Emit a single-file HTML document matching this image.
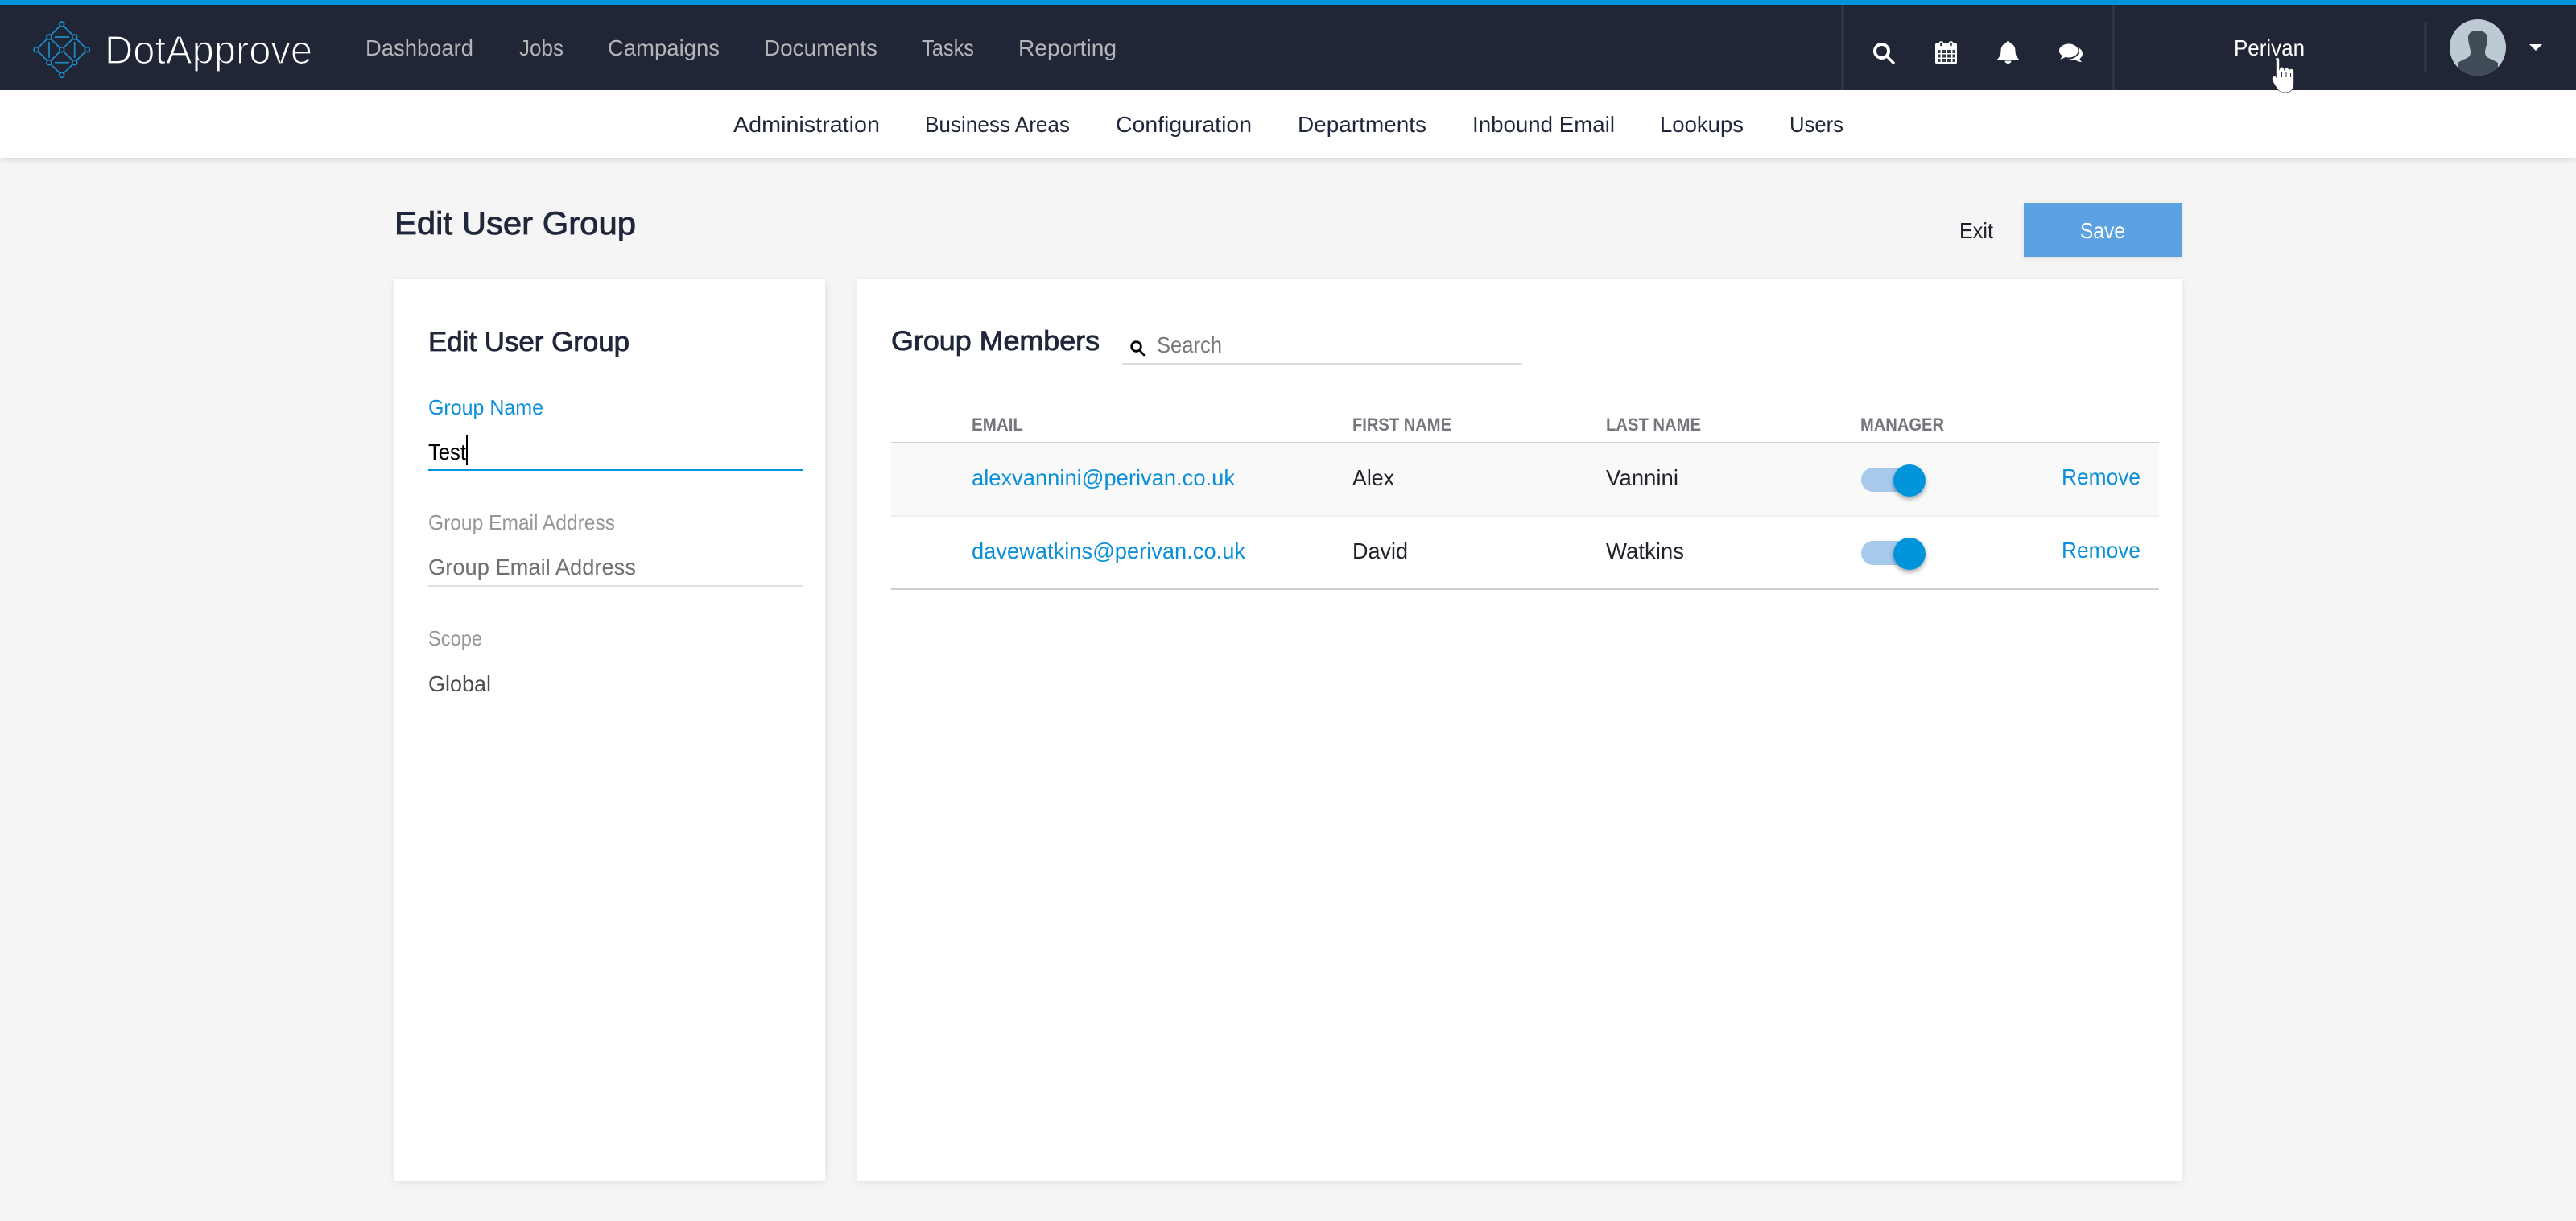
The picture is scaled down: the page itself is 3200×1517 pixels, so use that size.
<!DOCTYPE html>
<html lang="en">
<head>
<meta charset="utf-8">
<title>Edit User Group</title>
<style>
html,body{margin:0;padding:0;width:3200px;height:1517px;overflow:hidden;background:#f5f5f5}
.b{position:absolute}
svg{position:absolute;left:0;top:0}
text{font-family:"Liberation Sans",sans-serif;font-size:28px;white-space:pre}
.nav{fill:#b4b5b8}
.sub{fill:#20273a}
.td{fill:#20232c}
.lnk{fill:#0b90d8}
.th{font-size:22px;font-weight:bold;fill:#74767d}
.semi{stroke-width:.8;paint-order:stroke}
</style>
</head>
<body>
<div class="b" style="left:0;top:112px;width:3200px;height:84px;background:#fff;box-shadow:0 2px 8px rgba(0,0,0,.13)"></div>
<div class="b" style="left:0;top:0;width:3200px;height:112px;background:#202635"></div>
<div class="b" style="left:0;top:0;width:3200px;height:6px;background:#0094da"></div>
<div class="b" style="left:490px;top:347px;width:535px;height:1120px;background:#fff;box-shadow:0 2px 10px rgba(0,0,0,.09)"></div>
<div class="b" style="left:1065px;top:347px;width:1645px;height:1120px;background:#fff;box-shadow:0 2px 10px rgba(0,0,0,.09)"></div>
<div class="b" style="left:2514px;top:252px;width:196px;height:67px;background:#5aa2e2;box-shadow:0 2px 6px rgba(0,0,0,.09)"></div>

<svg width="3200" height="1517" viewBox="0 0 3200 1517" xmlns="http://www.w3.org/2000/svg">
<!-- logo -->
<g fill="none" stroke="#1b8ec9" stroke-width="1.700">
<path d="M76.700 30L61 46M76.700 30L92.700 46M61 46L45 61.700M92.700 46L108.300 61.700M45 61.700L61 77.700M108.300 61.700L92.700 77.700M61 77.700L76.700 93.300M92.700 77.700L76.700 93.300M61 46L76.700 61.700M92.700 46L76.700 61.700M61 77.700L76.700 61.700M92.700 77.700L76.700 61.700M61 52V72M92.700 52V72M68 46H86M68 77.700H86"/>
<g fill="#202635"><circle cx="76.700" cy="30" r="3"/><circle cx="61" cy="46" r="3"/><circle cx="92.700" cy="46" r="3"/><circle cx="45" cy="61.700" r="3"/><circle cx="76.700" cy="61.700" r="3"/><circle cx="108.300" cy="61.700" r="3"/><circle cx="61" cy="77.700" r="3"/><circle cx="92.700" cy="77.700" r="3"/><circle cx="76.700" cy="93.300" r="3"/></g>
</g>
<text x="130" y="79" textLength="258" lengthAdjust="spacingAndGlyphs" style="font-size:49px;fill:#fff;stroke:#202635;stroke-width:1.300">DotApprove</text>

<!-- main nav -->
<text class="nav" x="454" y="69" textLength="134" lengthAdjust="spacingAndGlyphs">Dashboard</text>
<text class="nav" x="645" y="69" textLength="55" lengthAdjust="spacingAndGlyphs">Jobs</text>
<text class="nav" x="755" y="69" textLength="139" lengthAdjust="spacingAndGlyphs">Campaigns</text>
<text class="nav" x="949" y="69" textLength="141" lengthAdjust="spacingAndGlyphs">Documents</text>
<text class="nav" x="1145" y="69" textLength="65" lengthAdjust="spacingAndGlyphs">Tasks</text>
<text class="nav" x="1265" y="69" textLength="122" lengthAdjust="spacingAndGlyphs">Reporting</text>

<!-- header separators -->
<rect x="2287" y="6" width="4" height="106" fill="#2d3342"/>
<rect x="2623" y="6" width="4" height="106" fill="#2d3342"/>
<rect x="3011" y="27" width="4" height="63" fill="#2d3342"/>

<!-- search icon -->
<circle cx="2337.500" cy="63.500" r="8.500" fill="none" stroke="#fff" stroke-width="4"/>
<path d="M2345 71L2352 78" stroke="#fff" stroke-width="3.400" stroke-linecap="round"/>
<!-- calendar -->
<rect x="2404" y="54" width="27" height="25" rx="1.500" fill="#fff"/>
<g fill="#202635" fill-opacity=".9">
<rect x="2407" y="62" width="3.500" height="4"/><rect x="2412" y="62" width="5" height="4"/><rect x="2419" y="62" width="5" height="4"/><rect x="2425.500" y="62" width="3.500" height="4"/>
<rect x="2407" y="67.500" width="3.500" height="4"/><rect x="2412" y="67.500" width="5" height="4"/><rect x="2419" y="67.500" width="5" height="4"/><rect x="2425.500" y="67.500" width="3.500" height="4"/>
<rect x="2407" y="73" width="3.500" height="4"/><rect x="2412" y="73" width="5" height="4"/><rect x="2419" y="73" width="5" height="4"/><rect x="2425.500" y="73" width="3.500" height="4"/>
</g>
<rect x="2409.500" y="52" width="4" height="6" rx="1.500" fill="#202635" stroke="#fff" stroke-width="1.500"/>
<rect x="2421.500" y="52" width="4" height="6" rx="1.500" fill="#202635" stroke="#fff" stroke-width="1.500"/>
<!-- bell -->
<path d="M2494.500 51c1.200 0 2 1 2 2.600c4.600 1 7 4.600 7 9.600c0 5 1.500 7.500 4.500 10.500v1.300h-27v-1.300c3-3 4.500-5.500 4.500-10.500c0-5 2.400-8.600 7-9.600c0-1.600.8-2.600 2-2.600z" fill="#fff"/>
<path d="M2490.500 75.500a4 3.500 0 0 0 8 0z" fill="#fff"/>
<!-- comments -->
<path d="M2581 59c4 1.500 6 4.500 6 7.500c0 3-1.500 5-3.500 6.500c.3 1.500 1.200 3 2.500 4c-3.500 0-6-1-8-3c-4 .6-8 0-11-1.500z" fill="#fff"/>
<ellipse cx="2570" cy="63.500" rx="12.500" ry="10" fill="#202635"/>
<path d="M2570 54.500c6.200 0 11.500 3.700 11.500 8.500s-5.300 8.500-11.500 8.500c-1.600 0-3-.2-4.400-.6c-2 1.500-4 2.300-6.400 2.500c1.300-1.300 2.200-2.700 2.600-4.300c-2.500-1.500-3.800-3.700-3.800-6.100c0-4.800 5.800-8.500 12-8.500z" fill="#fff"/>

<text x="2775" y="69" textLength="88" lengthAdjust="spacingAndGlyphs" style="fill:#fff">Perivan</text>

<!-- avatar -->
<clipPath id="av"><circle cx="3078" cy="59" r="35"/></clipPath>
<circle cx="3078" cy="59" r="35" fill="#bdcad4"/>
<path clip-path="url(#av)" d="M3066 47C3066 40 3072 38 3078 38C3084 38 3090 41 3090 48C3090 55 3087 60 3087 65C3087 70 3090 72 3096 74L3103 78V95H3053V78L3060 74C3066 72 3069 70 3069 65C3069 60 3066 54 3066 47Z" fill="#3f4b57"/>
<path d="M3142 55H3158L3150 63Z" fill="#fff"/>

<!-- sub nav -->
<text class="sub" x="911" y="164" textLength="182" lengthAdjust="spacingAndGlyphs">Administration</text>
<text class="sub" x="1149" y="164" textLength="180" lengthAdjust="spacingAndGlyphs">Business Areas</text>
<text class="sub" x="1386" y="164" textLength="169" lengthAdjust="spacingAndGlyphs">Configuration</text>
<text class="sub" x="1612" y="164" textLength="160" lengthAdjust="spacingAndGlyphs">Departments</text>
<text class="sub" x="1829" y="164" textLength="177" lengthAdjust="spacingAndGlyphs">Inbound Email</text>
<text class="sub" x="2062" y="164" textLength="104" lengthAdjust="spacingAndGlyphs">Lookups</text>
<text class="sub" x="2223" y="164" textLength="67" lengthAdjust="spacingAndGlyphs">Users</text>

<!-- page head -->
<text class="semi" x="490" y="291" textLength="300" lengthAdjust="spacingAndGlyphs" style="font-size:40px;fill:#20273a;stroke:#20273a">Edit User Group</text>
<text x="2434" y="296" textLength="42" lengthAdjust="spacingAndGlyphs" style="fill:#20232c">Exit</text>
<text x="2584" y="296" textLength="56" lengthAdjust="spacingAndGlyphs" style="fill:#fff">Save</text>

<!-- left card -->
<text class="semi" x="532" y="436" textLength="250" lengthAdjust="spacingAndGlyphs" style="font-size:34px;fill:#20273a;stroke:#20273a">Edit User Group</text>
<text x="532" y="515" textLength="143" lengthAdjust="spacingAndGlyphs" style="font-size:26px;fill:#0b90d8">Group Name</text>
<text x="532" y="571" textLength="47" lengthAdjust="spacingAndGlyphs" style="fill:#000">Test</text>
<rect x="579" y="541" width="2" height="37" fill="#000"/>
<rect x="532" y="583" width="465" height="2" fill="#0094da"/>
<text x="532" y="658" textLength="232" lengthAdjust="spacingAndGlyphs" style="font-size:26px;fill:#969696">Group Email Address</text>
<text x="532" y="714" textLength="258" lengthAdjust="spacingAndGlyphs" style="fill:#6f6f6f">Group Email Address</text>
<rect x="532" y="727" width="465" height="2" fill="#e0e0e0"/>
<text x="532" y="802" textLength="67" lengthAdjust="spacingAndGlyphs" style="font-size:26px;fill:#969696">Scope</text>
<text x="532" y="859" textLength="78" lengthAdjust="spacingAndGlyphs" style="fill:#4c4c4c">Global</text>

<!-- right card -->
<text class="semi" x="1107" y="435" textLength="259" lengthAdjust="spacingAndGlyphs" style="font-size:34px;fill:#20273a;stroke:#20273a">Group Members</text>
<circle cx="1411.500" cy="430.500" r="5.800" fill="none" stroke="#000" stroke-width="2.800"/>
<path d="M1416 435.500L1421 441" stroke="#000" stroke-width="2.600" stroke-linecap="round"/>
<text x="1437" y="438" textLength="81" lengthAdjust="spacingAndGlyphs" style="fill:#777">Search</text>
<rect x="1394" y="451" width="497" height="2" fill="#ddd"/>

<text class="th" x="1207" y="535" textLength="64" lengthAdjust="spacingAndGlyphs">EMAIL</text>
<text class="th" x="1680" y="535" textLength="123" lengthAdjust="spacingAndGlyphs">FIRST NAME</text>
<text class="th" x="1995" y="535" textLength="118" lengthAdjust="spacingAndGlyphs">LAST NAME</text>
<text class="th" x="2311" y="535" textLength="104" lengthAdjust="spacingAndGlyphs">MANAGER</text>

<rect x="1107" y="551" width="1575" height="89" fill="#f9f9f9"/>
<rect x="1107" y="549" width="1575" height="2" fill="#cfcfcf"/>
<rect x="1107" y="640" width="1575" height="2" fill="#eee"/>
<rect x="1107" y="731" width="1575" height="2" fill="#cfcfcf"/>

<text class="lnk" x="1207" y="603" textLength="327" lengthAdjust="spacingAndGlyphs">alexvannini@perivan.co.uk</text>
<text class="td" x="1680" y="603" textLength="52" lengthAdjust="spacingAndGlyphs">Alex</text>
<text class="td" x="1995" y="603" textLength="90" lengthAdjust="spacingAndGlyphs">Vannini</text>
<text class="lnk" x="2561" y="602" textLength="98" lengthAdjust="spacingAndGlyphs">Remove</text>

<text class="lnk" x="1207" y="694" textLength="340" lengthAdjust="spacingAndGlyphs">davewatkins@perivan.co.uk</text>
<text class="td" x="1680" y="694" textLength="69" lengthAdjust="spacingAndGlyphs">David</text>
<text class="td" x="1995" y="694" textLength="97" lengthAdjust="spacingAndGlyphs">Watkins</text>
<text class="lnk" x="2561" y="693" textLength="98" lengthAdjust="spacingAndGlyphs">Remove</text>

<filter id="ks" x="-50%" y="-50%" width="200%" height="200%"><feDropShadow dx="0" dy="3" stdDeviation="3" flood-color="#000" flood-opacity=".35"/></filter>
<rect x="2312" y="581" width="68" height="30" rx="15" fill="#a6c9ec"/>
<circle cx="2372" cy="597" r="20" fill="#0094da" filter="url(#ks)"/>
<rect x="2312" y="672" width="68" height="30" rx="15" fill="#a6c9ec"/>
<circle cx="2372" cy="688" r="20" fill="#0094da" filter="url(#ks)"/>

<!-- hand cursor -->
<path d="M2826.500 74a2.500 2.500 0 0 1 5 0V87c.5-5 6-5 6 .5c.5-4.500 6-4.500 6 .5c.5-3.500 5.500-3.500 6 1V104c0 6.500-3.500 11-10.500 11c-5.500 0-8.500-2-11-6c-2.500-4-5-7.500-5.500-10.500c-.5-3 2.800-5 4.800-3l.2 1V74z" fill="#fff" stroke="#30343f" stroke-width=".7"/>
<path d="M2834.500 90V96M2840 90V96M2845.500 91V96" stroke="#30343f" stroke-width="1" fill="none"/>
</svg>
</body>
</html>
